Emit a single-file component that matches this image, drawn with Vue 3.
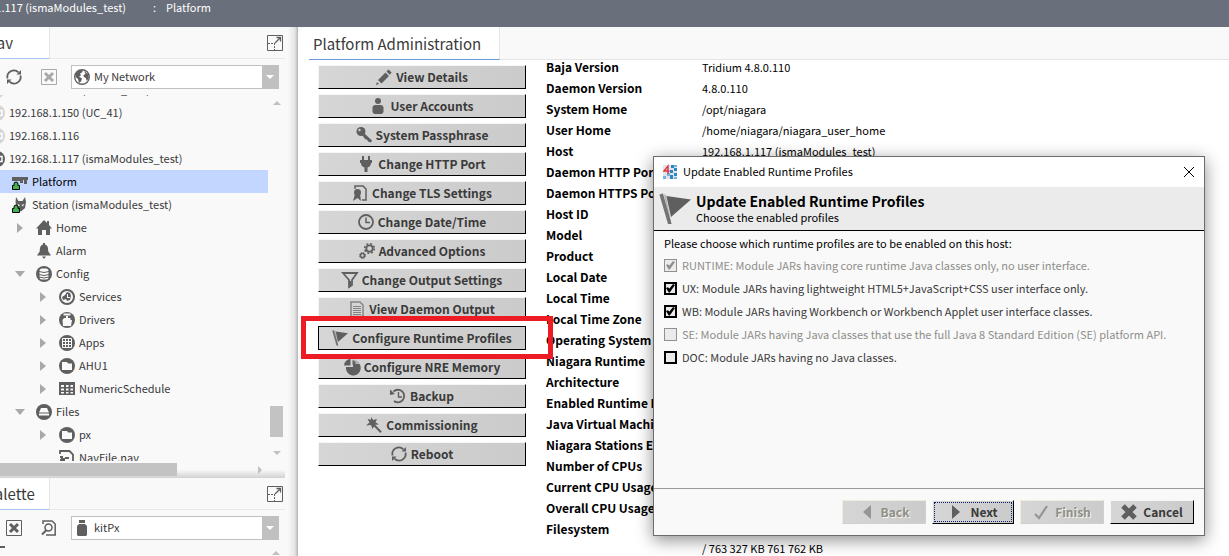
<template>
  <div class="app">
    <header class="pathbar">
      <a class="crumb host" href="#">192.168.1.117 (ismaModules_test)</a>
      <span class="sep">:</span>
      <a class="crumb" href="#">Platform</a>
    </header>

    <div class="workspace">
      <aside class="sidebar">
        <div class="side-head">
          <h2 class="side-tab">Nav</h2>
          <button class="icon-btn" aria-label="Maximize nav"><svg viewBox="0 0 16 16" v-html="icons.expand"></svg></button>
        </div>
        <div class="toolbar">
          <button class="icon-btn" aria-label="Refresh"><svg viewBox="0 0 16 16" v-html="icons.refresh"></svg></button>
          <button class="icon-btn" aria-label="Close tree" disabled><svg viewBox="0 0 16 16" v-html="icons.closeBox"></svg></button>
          <div class="combo">
            <svg viewBox="0 0 16 16" v-html="icons.globe"></svg>
            <select v-model="network" aria-label="Tree root">
              <option>My Network</option>
            </select>
            <span class="combo-arrow"></span>
          </div>
        </div>

        <div class="tree-area">
          <ul class="tree">
            <li v-for="node in nodes" :key="node.label" :class="['node', 'level-' + node.level, { selected: node.selected }]">
              <span :class="['twisty', node.state]"></span>
              <svg :class="{ faded: node.faded }" viewBox="0 0 16 16" v-html="icons[node.icon]"></svg>
              <span class="node-label">{{ node.label }}</span>
            </li>
          </ul>
          <div class="vscroll">
            <span class="arrow up"></span>
            <span class="vthumb"></span>
            <span class="arrow down"></span>
          </div>
        </div>
        <div class="hscroll">
          <span class="hthumb"></span>
          <span class="arrow right"></span>
        </div>

        <div class="side-head">
          <h2 class="side-tab">Palette</h2>
          <button class="icon-btn" aria-label="Maximize palette"><svg viewBox="0 0 16 16" v-html="icons.expand"></svg></button>
        </div>
        <div class="toolbar">
          <button class="icon-btn" aria-label="Close palette"><svg viewBox="0 0 16 16" v-html="icons.closeBox"></svg></button>
          <button class="icon-btn" aria-label="Open palette"><svg viewBox="0 0 16 16" v-html="icons.openPage"></svg></button>
          <div class="combo">
            <svg viewBox="0 0 16 16" v-html="icons.jar"></svg>
            <select v-model="palette" aria-label="Palette">
              <option>kitPx</option>
            </select>
            <span class="combo-arrow"></span>
          </div>
        </div>
        <div class="palette-area">
          <span class="palette-root"></span>
          <span class="arrow up"></span>
        </div>
      </aside>

      <main class="content">
        <div class="tabs">
          <h1 class="tab">Platform Administration</h1>
        </div>
        <div class="panel">
          <div class="actions">
            <div v-for="action in actions" :key="action.label" :class="['action', { marked: action.marked }]">
              <button class="btn">
                <svg viewBox="0 0 16 16" v-html="icons[action.icon]"></svg>
                {{ action.label }}
              </button>
            </div>
          </div>
          <table class="details">
            <tbody>
              <tr v-for="row in details" :key="row[0]">
                <th scope="row">{{ row[0] }}</th>
                <td>{{ row[1] }}</td>
              </tr>
            </tbody>
          </table>
        </div>
      </main>
    </div>

    <section class="dialog" role="dialog" aria-labelledby="dialog-title">
      <div class="titlebar">
        <svg class="logo" viewBox="0 0 14 14">
          <path fill="#dfe5ea" d="M0 0h14v14H0z" />
          <path fill="#2b86c5" d="M8 0h3v3H8zM11 3h3v3h-3zM7 5h3v3H7zM11 8h3v3h-3zM7 10h3v4H7z" />
          <path fill="#75b5dc" d="M0 11h3v3H0zM4 8h3v3H4zM11 0h3v2h-3zM11 12h3v2h-3z" />
          <path fill="none" stroke="#e0343c" stroke-width="1.4" d="M6.500 6H1L5 1v8" />
        </svg>
        <span id="dialog-title" class="title-text">Update Enabled Runtime Profiles</span>
        <button class="close" aria-label="Close"><svg viewBox="0 0 10 10"><path d="M0 0l10 10M10 0L0 10" stroke="#000" fill="none" /></svg></button>
      </div>
      <div class="banner">
        <svg viewBox="0 0 16 16" v-html="icons.flag"></svg>
        <div>
          <h2>Update Enabled Runtime Profiles</h2>
          <p>Choose the enabled profiles</p>
        </div>
      </div>
      <div class="dialog-body">
        <p>Please choose which runtime profiles are to be enabled on this host:</p>
        <label v-for="profile in profiles" :key="profile.label" :class="['check', { disabled: profile.disabled }]">
          <input v-model="profile.checked" type="checkbox" :disabled="profile.disabled" />
          <span>{{ profile.label }}</span>
        </label>
      </div>
      <div class="dialog-foot">
        <button class="btn" disabled><svg viewBox="0 0 16 16" v-html="icons.back"></svg>Back</button>
        <button class="btn focused"><svg viewBox="0 0 16 16" v-html="icons.next"></svg>Next</button>
        <button class="btn" disabled><svg viewBox="0 0 16 16" v-html="icons.check"></svg>Finish</button>
        <button class="btn cancel"><svg viewBox="0 0 16 16" v-html="icons.cross"></svg>Cancel</button>
      </div>
    </section>
  </div>
</template>

<script setup>
import { ref } from "vue";

const network = ref("My Network");
const palette = ref("kitPx");

const lock = '<path fill="#43b052" stroke="#000" d="M.5 15.500v-4h1.500V10a2 2 0 0 1 4 0v1.500h1.500v4z"/>';
const disc = '<circle cx="8" cy="8" r="8"/>';

const icons = {
  expand: '<path fill="none" stroke="currentColor" d="M.5.5h15v15H.5z"/><path fill="none" stroke="currentColor" stroke-dasharray="2 1" d="M1 8.500h7M7.500 8v7"/><path fill="none" stroke="currentColor" stroke-width="1.300" d="M8 8l5-5M9.500 2.500h4v4"/>',
  refresh: '<path fill="none" stroke="currentColor" stroke-width="1.800" d="M1.500 9.500A6.600 6.600 0 0 1 12.500 3.300M14.500 6.500a6.600 6.600 0 0 1-11 6.200"/><path d="M10.500 5.500H15V1zM5.500 10.500H1V15z"/>',
  closeBox: '<path fill="none" stroke="currentColor" d="M.5.5h15v15H.5z"/><path fill="none" stroke="currentColor" stroke-width="3" d="M4 4l8 8M12 4l-8 8"/>',
  globe: '<circle cx="8" cy="8" r="7.300" fill="#fff" stroke="currentColor" stroke-width="1.400"/><path d="M2 4l4-3 3 .5-1 2-2 1 1 2-2 1 3 2-1 3-2 1.500-1-4-2.500-2zM10 2l4 3 .8 4-2 3-1-3-2-1-.3-2 2-1z"/>',
  jar: '<path d="M5 0h6v3H5zM5 4h6l2 2v9l-1 1H4l-1-1V6z"/>',
  openPage: '<path fill="none" stroke="currentColor" stroke-width="1.500" d="M2 4V1h9l3.200 3v11H5"/><circle cx="7.500" cy="7.500" r="3.500" fill="none" stroke="currentColor" stroke-width="1.500"/><path stroke="currentColor" stroke-width="2" d="M5.500 10L1 14.500"/>',
  host: disc + '<path fill="none" stroke="#fff" stroke-width="1.500" d="M4 5.500h9v5H4zM6 8h5"/>',
  platform: '<path d="M0 3h16v3h-1v4h-3V6h-1v3H8V7H0z"/>' + lock,
  station: '<path d="M4 0l2.500 4h4L13 0l1 5-1 6-4 3.500-4-3L3.500 5z"/><path fill="#f9f9f9" d="M5.500 7l2.500 1-1.500 1.500zM12 7l-2.500 1 1.500 1.500z"/>' + lock,
  home: '<path d="M8 0l3 3V1h2v4l3 3.500h-2V15h-4v-5H6v5H2V8.500H0z"/>',
  bell: '<path d="M7 0h2v1.500c3 1 3 3 3.300 7L15 12.500H1l2.700-4C4 4.500 4 2.500 7 1.500zM6 13.500h4L8 16z"/>',
  database: disc + '<rect x="3.500" y="2.500" width="9" height="11" rx="2.500" fill="#f9f9f9"/><path fill="none" stroke="currentColor" d="M3 5.500q5 2 10 0M3 8.500q5 2 10 0M3 11q5 2 10 0"/>',
  services: '<circle cx="8" cy="8" r="7" fill="#f9f9f9" stroke="currentColor" stroke-width="2"/><path d="M3 8l3-2 2-3 3 1 1 3-1 4-3 1-1-2-3 1z"/><path fill="#f9f9f9" d="M8 5h1v3h2v1H8z"/>',
  drivers: disc + '<path fill="#f9f9f9" d="M4.500 1.500h7v2h-7zM7 4h2v2h2.500v2H13l-1 6H4L3.500 8l1.500-2h2z"/>',
  apps: disc + '<path fill="none" stroke="#f9f9f9" d="M4 3.500h8.500v9H3.500v-9zM6.500 3.500v9M9.500 3.500v9M3.500 6.500h9M3.500 9.500h9"/>',
  folder: disc + '<path fill="#f9f9f9" d="M3 4h5l1 1.500h4V12H3z"/>',
  schedule: '<path fill-rule="evenodd" d="M0 1h16v13H0zM2 4v2h3V4zm5 0v2h2.500V4zm4.500 0v2H14V4zM2 7.500v2h3v-2zm5 0v2h2.500v-2zm4.500 0v2H14v-2zM2 11v1.500h3V11zm5 0v1.500h2.500V11zm4.500 0v1.500H14V11z"/>',
  files: disc + '<path fill="#f9f9f9" d="M5 4h6l2 4.500v3H3v-3z"/><path d="M3 8.500h10v1H3z"/>',
  navFile: '<path fill="none" stroke="currentColor" stroke-width="1.800" d="M1 4V1h9.500L14 4.500V15H1"/><path d="M1 6h3v2h2V7h4v2H6v2h4v2H4v-2H1V9h1V8H1z"/>',
  pencil: '<path d="M0 16l1-3 2 2zM2 11l7.500-7.500 3.500 3.500L5.500 14.500zM10.500 2.500L12.500 .5 15.700 3.500l-2 2.200z"/>',
  user: '<circle cx="8" cy="3" r="3"/><path d="M2.500 14V10q0-3 3-3h5q3 0 3 3v4q-1 2-2 2h-7q-1 0-2-2z"/>',
  key: '<circle cx="5" cy="4.500" r="4.500"/><circle cx="3.500" cy="3" r="1.200" fill="#d0d0d0"/><path d="M6 8l2-2 8 7.500-1 2-3-1-1-2-1.500 0z"/>',
  plug: '<path d="M4 0h2v4h4V0h2v4h2v3h-1q0 3.500-3.500 4.500V16h-3v-4.500Q3 10.500 3 7H2V4h2z"/>',
  cert: '<path fill="none" stroke="currentColor" stroke-width="1.500" d="M3 4V1h8l3 3v11h-4"/><circle cx="5.500" cy="7.500" r="3.500"/><path d="M3 9h5l1 7-3.500-3L1 16z"/>',
  clock: '<circle cx="8" cy="8" r="7" fill="none" stroke="currentColor" stroke-width="1.800"/><path fill="none" stroke="currentColor" stroke-width="1.500" d="M8 3.500v5h4"/>',
  gears: '<circle cx="10.500" cy="5.500" r="3.200" fill="none" stroke="currentColor" stroke-width="1.800"/><circle cx="10.500" cy="5.500" r="4.800" fill="none" stroke="currentColor" stroke-width="1.600" stroke-dasharray="2 1.770"/><circle cx="3.500" cy="12.500" r="2" fill="none" stroke="currentColor" stroke-width="1.500"/><circle cx="3.500" cy="12.500" r="3" fill="none" stroke="currentColor" stroke-dasharray="1.400 .96"/>',
  funnel: '<path fill="none" stroke="currentColor" stroke-width="1.800" d="M1 1h14L10 8v5l-3 2V8z"/><path d="M7 9h2v6H7z"/>',
  page: '<path fill="none" stroke="#858585" stroke-width="1.500" d="M2 1h9l3 3v11.500H2z"/><path fill="none" stroke="#858585" d="M4 5.500h8M4 7.500h8M4 9.500h8M4 11.500h8M4 13.500h8"/>',
  flag: '<path d="M3.700 1.500L16 3.300 6 12z"/><path d="M.2.8L2 .3 6.200 15.500H4.500z" opacity=".85"/><path d="M2.500.8h.8l3 14.700h-.8z" opacity=".4"/>',
  pie: '<path d="M9 7.500V.5A7 7 0 0 1 16 9H9z" opacity=".3"/><path d="M6.500 0v6.500H0A6.500 6.500 0 0 1 6.500 0zM8.500 1a7 7 0 0 1 3.500 3l-3.500 2zM2 8h7V5h6.500A7.400 7.400 0 1 1 2 8z"/>',
  history: '<path fill="none" stroke="currentColor" stroke-width="1.800" d="M3.500 3.500A6.300 6.300 0 1 1 4 13"/><path d="M0 1.500l5 4.500-5 1z"/><path fill="none" stroke="currentColor" stroke-width="1.400" d="M8.500 4v5H12"/>',
  wand: '<path d="M5.500 0l1.500 3 4-1-1.500 3.200L13 7.500l-4 .3L6.500 12 5 8 0 8.500l3.500-3L1.500 2l3.200.8z"/><path stroke="currentColor" stroke-width="2" d="M8 8l7 7.300"/>',
  back: '<path d="M12 1v14L4 8z"/>',
  next: '<path d="M4 1v14l8-7z"/>',
  check: '<path fill="none" stroke="currentColor" stroke-width="2.200" d="M2 10l4 4L14 2"/>',
  cross: '<path fill="none" stroke="currentColor" stroke-width="5" d="M2 2l12 12M14 2L2 14"/>',
};

const nodes = [
  { label: "192.168.1.112 (Demos_test)", level: 0, icon: "host", faded: true },
  { label: "192.168.1.150 (UC_41)", level: 0, icon: "host", faded: true },
  { label: "192.168.1.116", level: 0, icon: "host", faded: true },
  { label: "192.168.1.117 (ismaModules_test)", level: 0, icon: "host" },
  { label: "Platform", level: 1, icon: "platform", selected: true },
  { label: "Station (ismaModules_test)", level: 1, icon: "station", state: "open" },
  { label: "Home", level: 2, icon: "home", state: "closed" },
  { label: "Alarm", level: 2, icon: "bell" },
  { label: "Config", level: 2, icon: "database", state: "open" },
  { label: "Services", level: 3, icon: "services", state: "closed" },
  { label: "Drivers", level: 3, icon: "drivers", state: "closed" },
  { label: "Apps", level: 3, icon: "apps", state: "closed" },
  { label: "AHU1", level: 3, icon: "folder", state: "closed" },
  { label: "NumericSchedule", level: 3, icon: "schedule", state: "closed" },
  { label: "Files", level: 2, icon: "files", state: "open" },
  { label: "px", level: 3, icon: "folder", state: "closed" },
  { label: "NavFile.nav", level: 3, icon: "navFile" },
];

const actions = [
  { label: "View Details", icon: "pencil" },
  { label: "User Accounts", icon: "user" },
  { label: "System Passphrase", icon: "key" },
  { label: "Change HTTP Port", icon: "plug" },
  { label: "Change TLS Settings", icon: "cert" },
  { label: "Change Date/Time", icon: "clock" },
  { label: "Advanced Options", icon: "gears" },
  { label: "Change Output Settings", icon: "funnel" },
  { label: "View Daemon Output", icon: "page" },
  { label: "Configure Runtime Profiles", icon: "flag", marked: true },
  { label: "Configure NRE Memory", icon: "pie" },
  { label: "Backup", icon: "history" },
  { label: "Commissioning", icon: "wand" },
  { label: "Reboot", icon: "refresh" },
];

const details = [
  ["Baja Version", "Tridium 4.8.0.110"],
  ["Daemon Version", "4.8.0.110"],
  ["System Home", "/opt/niagara"],
  ["User Home", "/home/niagara/niagara_user_home"],
  ["Host", "192.168.1.117 (ismaModules_test)"],
  ["Daemon HTTP Port", ""],
  ["Daemon HTTPS Port", ""],
  ["Host ID", ""],
  ["Model", ""],
  ["Product", ""],
  ["Local Date", ""],
  ["Local Time", ""],
  ["Local Time Zone", ""],
  ["Operating System", ""],
  ["Niagara Runtime", ""],
  ["Architecture", ""],
  ["Enabled Runtime Profiles", ""],
  ["Java Virtual Machine", ""],
  ["Niagara Stations Enabled", ""],
  ["Number of CPUs", ""],
  ["Current CPU Usage", ""],
  ["Overall CPU Usage", ""],
  ["Filesystem", ""],
  ["", "/ 763 327 KB 761 762 KB"],
];

const profiles = ref([
  { label: "RUNTIME: Module JARs having core runtime Java classes only, no user interface.", checked: true, disabled: true },
  { label: "UX: Module JARs having lightweight HTML5+JavaScript+CSS user interface only.", checked: true },
  { label: "WB: Module JARs having Workbench or Workbench Applet user interface classes.", checked: true },
  { label: "SE: Module JARs having Java classes that use the full Java 8 Standard Edition (SE) platform API.", checked: false, disabled: true },
  { label: "DOC: Module JARs having no Java classes.", checked: false },
]);
</script>

<style>
body {
  margin: 0;
  background: #fff;
}
</style>

<style scoped>
* {
  box-sizing: border-box;
}
.app {
  position: relative;
  display: flex;
  flex-direction: column;
  height: 100vh;
  overflow: hidden;
  font-family: "Noto Sans CJK SC", "Open Sans", sans-serif;
  font-size: 11px;
  line-height: 16px;
  color: #000;
}
h1, h2, p, ul {
  margin: 0;
  padding: 0;
  font-weight: 400;
}
button, select {
  font: inherit;
  color: inherit;
}
svg {
  display: block;
  flex: none;
  width: 16px;
  height: 16px;
  fill: currentColor;
  color: #5f5f5f;
  overflow: visible;
}

.pathbar {
  display: flex;
  flex: none;
  height: 27px;
  background: #6a707b;
  color: #fff;
  line-height: 14px;
}
.crumb {
  color: #fff;
  text-decoration: none;
  white-space: nowrap;
}
.host {
  display: flex;
  justify-content: flex-end;
  width: 126px;
}
.sep {
  width: 40px;
  padding-left: 27px;
}

.workspace {
  display: flex;
  flex: 1;
  min-height: 0;
  background: #f9f9f9;
}
.sidebar {
  display: flex;
  flex-direction: column;
  flex: none;
  width: 298px;
  padding-right: 13px;
  color: #3a3a3a;
  background: linear-gradient(to left, #b4b4b4, #e4e4e4 3px, #f9f9f9 10px);
  overflow: hidden;
}
.side-head {
  display: flex;
  flex: none;
  justify-content: space-between;
  align-items: center;
  height: 32px;
  padding-right: 2px;
  border-bottom: 1px solid #e9e9e9;
}
.side-tab {
  align-self: stretch;
  width: 68px;
  margin: 0 0 -1px -18px;
  padding-left: 4px;
  border-right: 1px solid #e4e4e4;
  border-bottom: 1px solid #a9c6ef;
  background: #fff;
  font-size: 15px;
  line-height: 32px;
}
.icon-btn {
  padding: 0;
  border: 0;
  background: none;
}
.icon-btn:disabled svg {
  color: #a9a9a9;
}
.toolbar {
  display: flex;
  flex: none;
  align-items: center;
  gap: 19px;
  height: 36px;
  padding: 0 6px;
}
.combo {
  display: flex;
  flex: 1;
  align-items: center;
  height: 24px;
  margin-left: -5px;
  padding-left: 2px;
  border: 1px solid #c0c0c0;
  background: #fff;
}
.combo select {
  flex: 1;
  min-width: 0;
  height: 22px;
  padding: 0 4px 2px;
  border: 0;
  appearance: none;
  background: none;
}
.combo-arrow {
  display: flex;
  align-items: center;
  justify-content: center;
  width: 16px;
  height: 22px;
  background: #c0c0c0;
}
.combo-arrow::before {
  content: "";
  border: 4px solid transparent;
  border-top-color: #fff;
  border-bottom: 0;
}

.tree-area {
  display: flex;
  flex: none;
  height: 366px;
  overflow: hidden;
}
.tree {
  flex: 1;
  margin-top: -17px;
  list-style: none;
}
.node {
  display: flex;
  align-items: center;
  height: 23px;
  white-space: nowrap;
}
.node svg {
  margin-right: 4px;
}
.node svg.faded {
  color: #d4d4d4;
}
.node-label {
  padding-bottom: 2px;
}
.selected {
  background: #c2d6ff;
  color: #000;
}
.twisty {
  display: flex;
  flex: none;
  align-items: center;
  justify-content: center;
  width: 32px;
}
.level-0 {
  margin-left: -43px;
}
.level-1 .twisty {
  width: 12px;
}
.level-2 .twisty {
  margin-left: 4px;
}
.level-3 .twisty {
  margin-left: 27px;
}
.open::before {
  content: "";
  border: 5px solid transparent;
  border-top: 6px solid #a9a9a9;
  border-bottom: 0;
}
.level-1 .open::before {
  margin-left: -22px;
}
.closed::before {
  content: "";
  border: 5px solid transparent;
  border-left: 6px solid #a9a9a9;
  border-right: 0;
}
.arrow {
  width: 0;
  height: 0;
  border: 4px solid transparent;
}
.arrow.up {
  border-top: 0;
  border-bottom-color: #c0c0c0;
}
.arrow.down {
  border-bottom: 0;
  border-top-color: #c0c0c0;
}
.arrow.right {
  border-right: 0;
  border-left-color: #c0c0c0;
}
.vscroll {
  display: flex;
  flex-direction: column;
  align-items: center;
  justify-content: space-between;
  width: 17px;
  padding: 6px 0;
}
.vthumb {
  width: 13px;
  height: 31px;
  margin: auto 0 14px;
  background: #c3c3c3;
}
.hscroll {
  display: flex;
  flex: none;
  align-items: center;
  justify-content: space-between;
  height: 17px;
  padding-right: 23px;
  background: linear-gradient(to bottom, #f9f9f9 50%, #d2d2d2);
}
.hthumb {
  width: 177px;
  height: 13px;
  background: #c3c3c3;
}
.palette-area {
  display: flex;
  justify-content: space-between;
  padding: 0 5px 0 0;
}
.palette-root {
  width: 5px;
  height: 2px;
  background: #5f5f5f;
}
.palette-area .arrow {
  margin-top: 5px;
}

.content {
  flex: 1;
  min-width: 0;
  border-top-left-radius: 9px;
  background: #fff;
  overflow: hidden;
}
.tabs {
  display: flex;
  height: 33px;
  margin-left: 11px;
  border-bottom: 1px solid #e4e4e4;
  background: #f9f9f9;
}
.tab {
  height: 33px;
  padding: 1px 18px 0 4px;
  border-right: 1px solid #e4e4e4;
  border-bottom: 1px solid #6b98dc;
  background: #fff;
  color: #3a3a3a;
  font-size: 15px;
  line-height: 32px;
}
.panel {
  display: flex;
  gap: 20px;
  padding-left: 20px;
}
.actions {
  display: flex;
  flex: none;
  flex-direction: column;
  gap: 5px;
  width: 208px;
  padding-top: 5px;
}
.action {
  position: relative;
}
.btn {
  display: flex;
  align-items: center;
  justify-content: center;
  gap: 4px;
  width: 100%;
  height: 24px;
  padding: 0;
  border: 1px solid #000;
  border-top-color: #f6f6f6;
  border-left-color: #f6f6f6;
  border-radius: 0;
  background: linear-gradient(to right, #d6d6d6, #cbcbcb);
  color: #3a3a3a;
  font-size: 12px;
  font-weight: 700;
  white-space: nowrap;
}
.marked {
  z-index: 1;
}
.marked .btn {
  border-color: #000;
}
.marked::after {
  content: "";
  position: absolute;
  inset: -10px -27px -9px -17px;
  border: 5px solid #ed1c24;
  pointer-events: none;
}
.details {
  flex: 1;
  align-self: flex-start;
  margin-top: -4px;
  border-collapse: collapse;
  table-layout: fixed;
}
.details th, .details td {
  height: 21px;
  padding: 0;
  text-align: left;
  white-space: nowrap;
}
.details tr:last-child td {
  height: 17px;
}
.details tr:last-child th {
  height: 17px;
}
.details th {
  width: 156px;
  font-size: 12px;
  font-weight: 700;
}

.dialog {
  position: absolute;
  top: 156px;
  right: 24px;
  display: flex;
  flex-direction: column;
  width: 552px;
  height: 380px;
  border: 1px solid #6c6c6c;
  background: #f9f9f9;
  box-shadow: 0 4px 16px rgba(0, 0, 0, 0.45);
  z-index: 2;
}
.titlebar {
  display: flex;
  align-items: center;
  height: 30px;
  padding: 0 10px 0 9px;
  background: #fff;
}
.logo {
  width: 14px;
  height: 14px;
}
.title-text {
  flex: 1;
  padding: 0 0 2px 6px;
}
.close {
  padding: 0;
  border: 0;
  background: none;
}
.close svg {
  width: 10px;
  height: 10px;
}
.banner {
  display: flex;
  gap: 5px;
  height: 44px;
  padding: 6px 5px;
  border-bottom: 1px solid #000;
  background: #ebebeb;
}
.banner svg {
  width: 32px;
  height: 32px;
}
.banner h2 {
  font-size: 14px;
  font-weight: 700;
}
.dialog-body {
  display: flex;
  flex: 1;
  flex-direction: column;
  padding: 4px 10px;
}
.dialog-body p {
  height: 19px;
}
.check {
  display: flex;
  align-items: center;
  gap: 5px;
  height: 23px;
  color: #3a3a3a;
  white-space: nowrap;
}
.check span {
  padding-bottom: 2px;
}
.check input {
  display: flex;
  align-items: center;
  justify-content: center;
  width: 13px;
  height: 13px;
  margin: 0;
  border: 2px solid #000;
  appearance: none;
  background: #ebebeb;
}
.check input:checked::before {
  content: "";
  width: 9px;
  height: 9px;
  background: #000;
  clip-path: polygon(0 45%, 20% 35%, 38% 50%, 78% 0, 100% 12%, 42% 95%, 30% 95%);
}
.check.disabled {
  color: #8e8e8a;
}
.check.disabled input {
  border: 1px solid #909090;
}
.check.disabled input:checked::before {
  background: #909090;
}
.dialog-foot {
  display: flex;
  align-items: flex-start;
  justify-content: flex-end;
  gap: 6px;
  height: 47px;
  padding: 11px 10px 0;
  border-top: 1px solid #9c9c96;
}
.dialog-foot .btn {
  width: 84px;
  gap: 6px;
}
.dialog-foot .btn:disabled {
  border-color: #ededdc #d0d0d0 #d0d0d0 #ededdc;
  color: #8e8e8a;
  text-shadow: 1px 1px 0 #f4f4e8;
}
.dialog-foot .btn:disabled svg {
  color: #959595;
}
.dialog-foot .focused {
  width: 82px;
  outline: 1px dotted #0a246a;
  outline-offset: -3px;
}
</style>
